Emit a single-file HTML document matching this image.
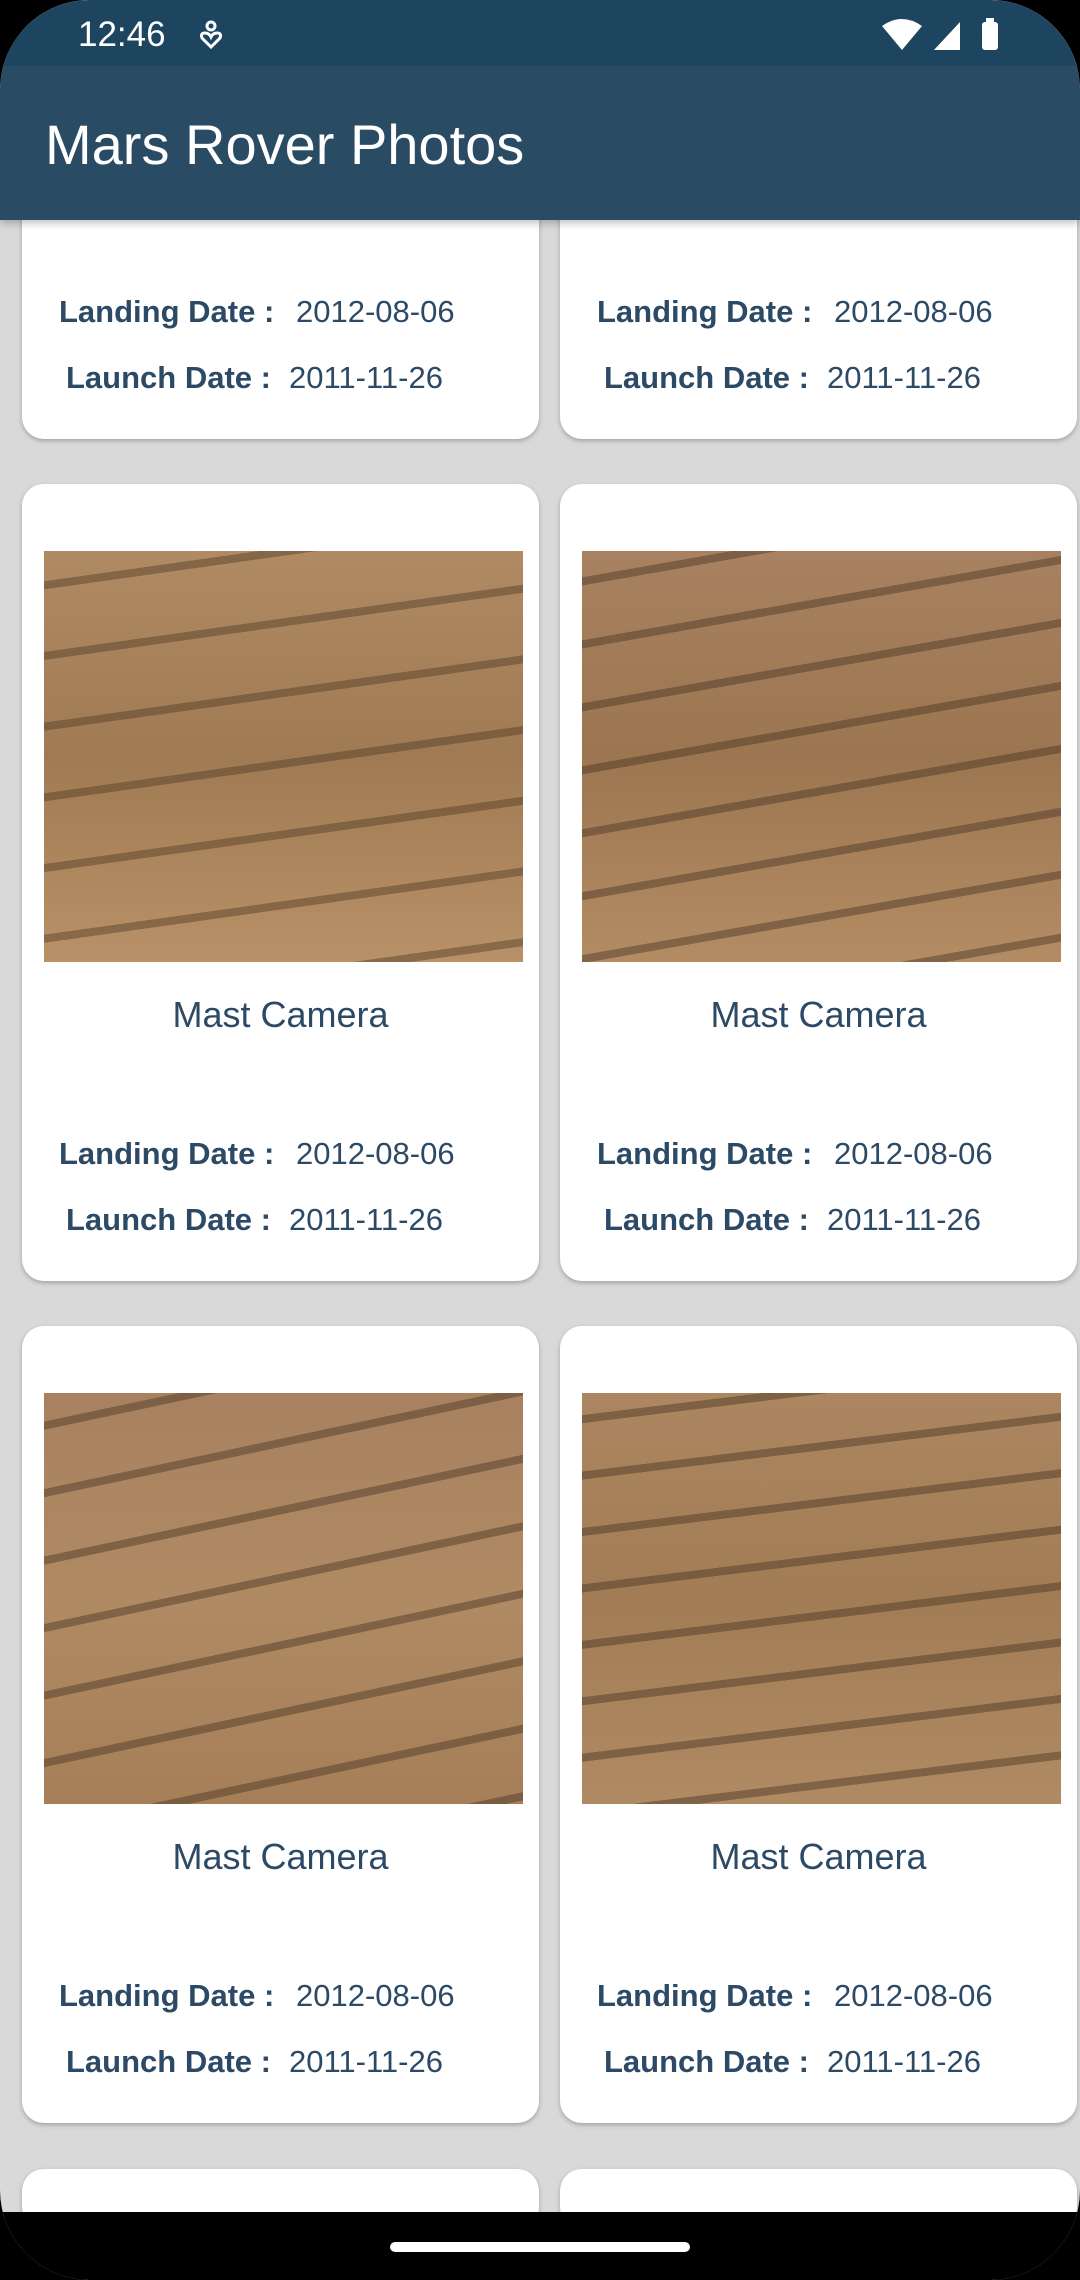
<!DOCTYPE html>
<html><head><meta charset="utf-8"><style>
*{margin:0;padding:0;box-sizing:border-box}
html,body{width:1080px;height:2280px;overflow:hidden;background:#000}
#screen{position:absolute;left:0;top:0;width:1080px;height:2280px;border-radius:90px;overflow:hidden;background:#d9d9d9;font-family:"Liberation Sans",Roboto,sans-serif}
#status{position:absolute;left:0;top:0;width:1080px;height:66px;background:#1e4560;color:#fff;z-index:7}
#appbar{position:absolute;left:0;top:66px;width:1080px;height:154px;background:#2a4b64;color:#fff;font-size:56px;z-index:5;box-shadow:0 3px 8px rgba(0,0,0,.25)}
#appbar span{position:absolute;left:45px;top:46px}
.card{position:absolute;width:517px;height:797px;background:#fff;border-radius:22px;box-shadow:0 2px 5px rgba(0,0,0,.25);overflow:hidden;color:#2c4a66}
.img{position:absolute;left:22px;top:67px;width:479px;height:411px}
.cam{position:absolute;left:0;width:100%;top:510px;text-align:center;font-size:36px}
.l{position:absolute;font-size:31px;font-weight:bold;white-space:nowrap}
.v{position:absolute;font-size:31px;white-space:nowrap}
#nav{position:absolute;left:0;top:2212px;width:1080px;height:68px;background:#000;z-index:6}
#nav div{position:absolute;left:390px;top:30px;width:300px;height:10px;border-radius:5px;background:#fff}
</style></head><body><div id="screen">
<div id="status"><span style="position:absolute;left:78px;top:15px;font-size:35px">12:46</span>
<svg style="position:absolute;left:198px;top:20px" width="26" height="30" viewBox="0 0 26 30"><circle cx="13" cy="6" r="4" fill="none" stroke="#fff" stroke-width="3"/><path d="M13 27 L4 18 Q2 13 7 13 Q11 13 13 17 Q15 13 19 13 Q24 13 22 18 Z" fill="none" stroke="#fff" stroke-width="3"/></svg>
<svg style="position:absolute;left:880px;top:18px" width="130" height="34" viewBox="0 0 130 34"><path d="M2 8 Q22 -6 42 8 L22 32 Z" fill="#fff"/><path d="M54 32 L80 4 L80 32 Z" fill="#fff"/><rect x="102" y="4" width="16" height="28" rx="3" fill="#fff"/><rect x="106" y="0" width="8" height="6" fill="#fff"/></svg>
</div>
<div id="appbar"><span>Mars Rover Photos</span></div>

<div class="card" style="left:22px;top:-358px">
<div class="l" style="left:37px;top:652px">Landing Date :</div><div class="v" style="left:274px;top:652px">2012-08-06</div>
<div class="l" style="left:44px;top:718px">Launch Date :</div><div class="v" style="left:267px;top:718px">2011-11-26</div></div>
<div class="card" style="left:560px;top:-358px">
<div class="l" style="left:37px;top:652px">Landing Date :</div><div class="v" style="left:274px;top:652px">2012-08-06</div>
<div class="l" style="left:44px;top:718px">Launch Date :</div><div class="v" style="left:267px;top:718px">2011-11-26</div></div>

<div class="card" style="left:22px;top:484px">
<div class="img" style="background:repeating-linear-gradient(172deg,rgba(90,65,45,.0) 0 30px,rgba(80,60,40,.45) 30px 38px,rgba(0,0,0,0) 38px 70px),linear-gradient(180deg,#b08a62,#a07a52 50%,#b89168)"></div>
<div class="cam">Mast Camera</div>
<div class="l" style="left:37px;top:652px">Landing Date :</div><div class="v" style="left:274px;top:652px">2012-08-06</div>
<div class="l" style="left:44px;top:718px">Launch Date :</div><div class="v" style="left:267px;top:718px">2011-11-26</div></div>
<div class="card" style="left:560px;top:484px">
<div class="img" style="background:repeating-linear-gradient(170deg,rgba(0,0,0,0) 0 26px,rgba(70,52,36,.45) 26px 34px,rgba(0,0,0,0) 34px 62px),linear-gradient(180deg,#a88260,#9c7650 50%,#b48c64)"></div>
<div class="cam">Mast Camera</div>
<div class="l" style="left:37px;top:652px">Landing Date :</div><div class="v" style="left:274px;top:652px">2012-08-06</div>
<div class="l" style="left:44px;top:718px">Launch Date :</div><div class="v" style="left:267px;top:718px">2011-11-26</div></div>

<div class="card" style="left:22px;top:1326px">
<div class="img" style="background:repeating-linear-gradient(168deg,rgba(0,0,0,0) 0 28px,rgba(70,52,36,.45) 28px 36px,rgba(0,0,0,0) 36px 66px),linear-gradient(180deg,#a88260,#b08a62 50%,#a67f58)"></div>
<div class="cam">Mast Camera</div>
<div class="l" style="left:37px;top:652px">Landing Date :</div><div class="v" style="left:274px;top:652px">2012-08-06</div>
<div class="l" style="left:44px;top:718px">Launch Date :</div><div class="v" style="left:267px;top:718px">2011-11-26</div></div>
<div class="card" style="left:560px;top:1326px">
<div class="img" style="background:repeating-linear-gradient(173deg,rgba(0,0,0,0) 0 22px,rgba(70,52,36,.45) 22px 30px,rgba(0,0,0,0) 30px 56px),linear-gradient(180deg,#ac8660,#a27c54 50%,#b08a62)"></div>
<div class="cam">Mast Camera</div>
<div class="l" style="left:37px;top:652px">Landing Date :</div><div class="v" style="left:274px;top:652px">2012-08-06</div>
<div class="l" style="left:44px;top:718px">Launch Date :</div><div class="v" style="left:267px;top:718px">2011-11-26</div></div>

<div class="card" style="left:22px;top:2169px;height:60px"></div>
<div class="card" style="left:560px;top:2169px;height:60px"></div>
<div id="nav"><div></div></div>
</div></body></html>
